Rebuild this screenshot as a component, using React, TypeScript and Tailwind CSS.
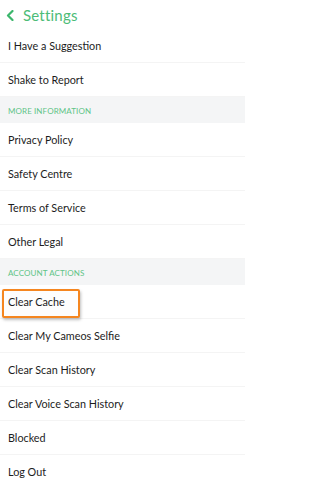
import React from "react";

const font = { fontFamily: '"Lato", "Noto Sans", sans-serif' };

function Row({ label, highlight }: { label: string; highlight?: boolean }) {
  return (
    <div className="h-[34px] flex items-center border-b border-[#f4f4f4] relative">
      {highlight && (
        <div className="absolute left-[2px] top-[4px] w-[78px] h-[29px] border-2 border-[#f5861f] rounded-[2px] shadow-[1px_2px_3px_rgba(0,0,0,0.25)] bg-[#fdfdfd]" />
      )}
      <span className="relative pl-[8px] pt-[2px] text-[10.8px] text-[#1c1c1c]">{label}</span>
    </div>
  );
}

function Section({ label }: { label: string }) {
  return (
    <div className="h-[26px] flex items-center bg-[#f4f5f6]">
      <span className="pl-[8px] pt-[1px] text-[8px] text-[#5fc487] uppercase tracking-[0.1px]">{label}</span>
    </div>
  );
}

export default function App() {
  return (
    <div className="w-[245px] h-[487px] bg-white overflow-hidden" style={font}>
      <div className="h-[29px] flex items-center pl-[6px] gap-[9px] pt-[2px]">
        <svg width="8" height="11" viewBox="0 0 8 11">
          <path d="M6.5 1 L2 5.5 L6.5 10" fill="none" stroke="#3cb66c" strokeWidth="2.2" strokeLinecap="round" strokeLinejoin="round" />
        </svg>
        <span className="text-[15px] text-[#4cbc77] tracking-[0.2px]">Settings</span>
      </div>
      <Row label="I Have a Suggestion" />
      <Row label="Shake to Report" />
      <Section label="More Information" />
      <Row label="Privacy Policy" />
      <Row label="Safety Centre" />
      <Row label="Terms of Service" />
      <Row label="Other Legal" />
      <Section label="Account Actions" />
      <Row label="Clear Cache" highlight />
      <Row label="Clear My Cameos Selfie" />
      <Row label="Clear Scan History" />
      <Row label="Clear Voice Scan History" />
      <Row label="Blocked" />
      <Row label="Log Out" />
    </div>
  );
}
